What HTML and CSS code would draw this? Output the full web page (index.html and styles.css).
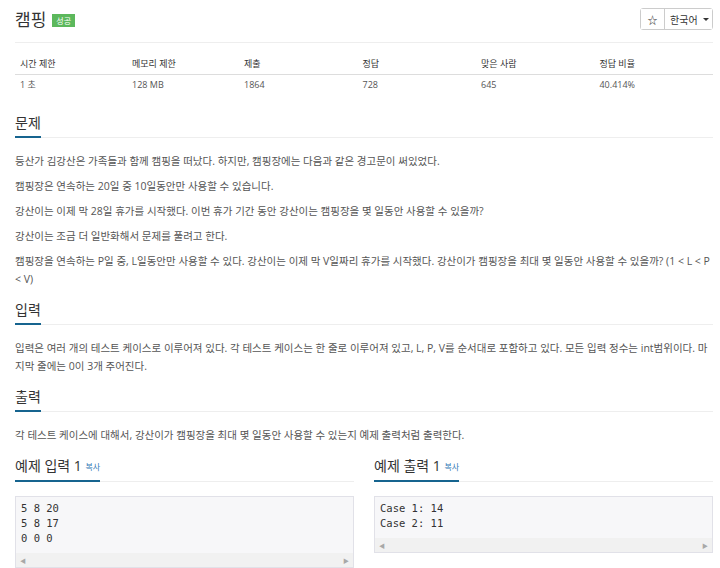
FILE: index.html
```html
<!DOCTYPE html>
<html lang="ko">

<head>
    <meta charset="UTF-8">
    <title>캠핑</title>
    <link rel="stylesheet" href="styles.css">
</head>

<body>
    <div class="page">
        <!-- Cabeçalho -->
        <div class="page-header">
            <h1 class="title">캠핑<span class="badge">성공</span></h1>
            <div class="btn-group">
                <button class="btn btn-star">☆</button>
                <button class="btn btn-lang">한국어<span class="caret"></span></button>
            </div>
        </div>

        <!-- Informações -->
        <table class="info">
            <thead>
                <tr>
                    <th class="col-a">시간 제한</th>
                    <th class="col-a">메모리 제한</th>
                    <th>제출</th>
                    <th>정답</th>
                    <th>맞은 사람</th>
                    <th>정답 비율</th>
                </tr>
            </thead>
            <tbody>
                <tr>
                    <td>1 초</td>
                    <td>128 MB</td>
                    <td>1864</td>
                    <td>728</td>
                    <td>645</td>
                    <td>40.414%</td>
                </tr>
            </tbody>
        </table>

        <!-- Problema -->
        <section class="problem-section first">
            <div class="headline">
                <h2>문제</h2>
            </div>
            <div class="problem-text">
                <p>등산가 김강산은 가족들과 함께 캠핑을 떠났다. 하지만, 캠핑장에는 다음과 같은 경고문이 써있었다.</p>
                <p>캠핑장은 연속하는 20일 중 10일동안만 사용할 수 있습니다.</p>
                <p>강산이는 이제 막 28일 휴가를 시작했다. 이번 휴가 기간 동안 강산이는 캠핑장을 몇 일동안 사용할 수 있을까?</p>
                <p>강산이는 조금 더 일반화해서 문제를 풀려고 한다.</p>
                <p>캠핑장을 연속하는 P일 중, L일동안만 사용할 수 있다. 강산이는 이제 막 V일짜리 휴가를 시작했다. 강산이가 캠핑장을 최대 몇 일동안 사용할 수 있을까? (1 &lt; L &lt; P &lt; V)</p>
            </div>
        </section>

        <section class="problem-section">
            <div class="headline">
                <h2>입력</h2>
            </div>
            <div class="problem-text">
                <p>입력은 여러 개의 테스트 케이스로 이루어져 있다. 각 테스트 케이스는 한 줄로 이루어져 있고, L, P, V를 순서대로 포함하고 있다. 모든 입력 정수는 int범위이다. 마지막 줄에는 0이 3개 주어진다.</p>
            </div>
        </section>

        <section class="problem-section">
            <div class="headline">
                <h2>출력</h2>
            </div>
            <div class="problem-text">
                <p>각 테스트 케이스에 대해서, 강산이가 캠핑장을 최대 몇 일동안 사용할 수 있는지 예제 출력처럼 출력한다.</p>
            </div>
        </section>

        <!-- Exemplos -->
        <div class="samples">
            <section class="sample">
                <div class="headline">
                    <h2>예제 입력 1 <a class="copy">복사</a></h2>
                </div>
                <div class="sample-box">
                    <pre>5 8 20
5 8 17
0 0 0</pre>
                    <div class="scrollbar"><span>◀</span><span>▶</span></div>
                </div>
            </section>
            <section class="sample">
                <div class="headline">
                    <h2>예제 출력 1 <a class="copy">복사</a></h2>
                </div>
                <div class="sample-box">
                    <pre>Case 1: 14
Case 2: 11</pre>
                    <div class="scrollbar"><span>◀</span><span>▶</span></div>
                </div>
            </section>
        </div>
    </div>
</body>

</html>
```

FILE: styles.css
```css
html,
body {
    overflow: hidden;
}

body {
    margin: 0;
    background: #fff;
    font-family: "Open Sans", "Noto Sans CJK KR", sans-serif;
    color: #555;
}

.page {
    padding: 6px 7px 0 15px;
}

.page-header {
    display: flex;
    justify-content: space-between;
    align-items: flex-start;
    padding-bottom: 8px;
    border-bottom: 1px solid #eee;
}

.title {
    margin: 0;
    font-size: 17px;
    line-height: 28px;
    font-weight: normal;
    color: #333;
    display: flex;
    align-items: center;
}

.badge {
    display: inline-block;
    margin-left: 6px;
    margin-top: 1px;
    padding: 1px 4px;
    font-size: 8px;
    line-height: 11px;
    color: #fff;
    background: #5cb85c;
}

.btn-group {
    display: flex;
    margin-top: 2px;
    border: 1px solid #ccc;
    border-radius: 3px;
}

.btn {
    height: 20px;
    padding: 0;
    border: none;
    background: #fff;
    font-family: "Open Sans", "Noto Sans CJK KR", sans-serif;
    font-size: 10px;
    color: #333;
    display: flex;
    align-items: center;
}

.btn-star {
    width: 24px;
    justify-content: center;
    border-right: 1px solid #ccc;
}

.btn-lang {
    width: 47px;
    padding-left: 5px;
}

.caret {
    display: inline-block;
    margin-left: 5px;
    border-top: 3px solid #333;
    border-left: 3px solid transparent;
    border-right: 3px solid transparent;
}

/* Tabela */
table.info {
    width: 100%;
    margin-top: 11px;
    border-collapse: collapse;
    table-layout: fixed;
    font-size: 9px;
    line-height: 14px;
}

table.info th,
table.info td {
    padding: 3px 5px;
    text-align: left;
}

table.info th {
    font-weight: normal;
    color: #333;
    width: 17%;
    border-bottom: 1px solid #ddd;
}

table.info th.col-a {
    width: 16%;
}

table.info td {
    color: #555;
}

/* Seções */
.problem-section {
    margin-top: 12px;
}

.problem-section.first {
    margin-top: 18px;
}

.headline {
    display: flex;
    border-bottom: 1px solid #eee;
}

.headline h2 {
    margin: 0 0 -1px;
    padding-bottom: 3px;
    font-size: 14px;
    line-height: 20px;
    font-weight: normal;
    color: #333;
    border-bottom: 2px solid #16648f;
}

.problem-text {
    margin-top: 14px;
    font-size: 10.5px;
    line-height: 18px;
}

.problem-text p {
    margin: 0 0 7px;
}

.problem-text p:last-child {
    margin-bottom: 0;
}

/* Exemplos */
.samples {
    display: grid;
    grid-template-columns: 1fr 1fr;
    gap: 20px;
    margin-top: 12px;
}

.copy {
    font-size: 8px;
    color: #337ab7;
    vertical-align: 1px;
}

.sample-box {
    margin-top: 14px;
    border: 1px solid #e1e1e8;
    background: #f7f7f9;
}

.sample-box pre {
    margin: 0;
    padding: 4px 5px 7px;
    font-family: "DejaVu Sans Mono", monospace;
    font-size: 10.5px;
    line-height: 15px;
    color: #333;
}

.scrollbar {
    height: 14px;
    display: flex;
    justify-content: space-between;
    align-items: center;
    padding: 0 4px;
    background: #f1f1f1;
    font-size: 6px;
    color: #a8a8a8;
}
```
